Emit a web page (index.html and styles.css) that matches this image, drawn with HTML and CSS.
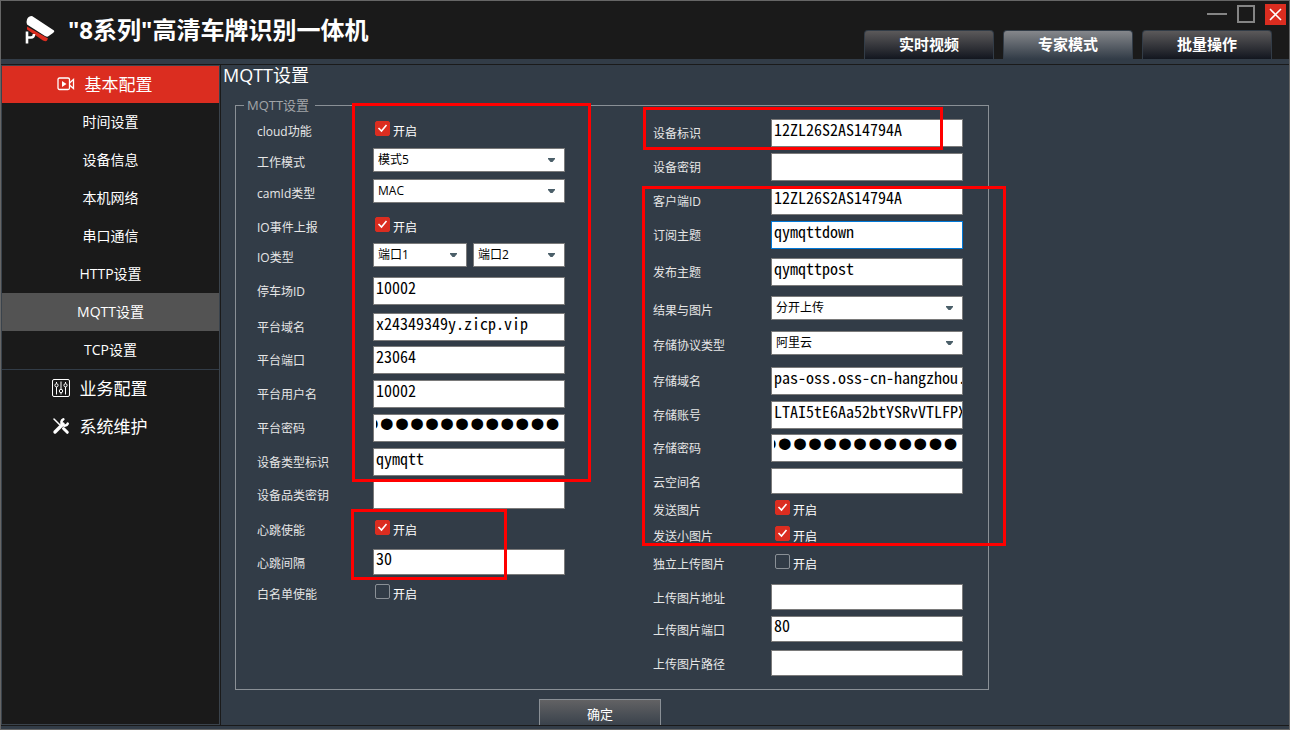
FILE: index.html
```html
<!DOCTYPE html>
<html lang="zh-CN">
<head>
<meta charset="utf-8">
<title>"8系列"高清车牌识别一体机</title>
<link rel="stylesheet" href="styles.css">
</head>
<body>
<div class="app">
  <header class="header">
    <div class="brand">
      <svg class="logo" width="32" height="30" viewBox="0 0 32 30" aria-hidden="true">
        <path d="M4 4.500Q5 1 9 1L31 15.500Q32 16.500 30 18L25 21.500Q24 22 22 21L4 9.500Q3 7 4 4.500Z" fill="#fff"/>
        <path d="M4 11.500L25 23.500L24 25.500Q23 27 20 25.500L4 14.500Z" fill="#db2d20"/>
        <path d="M4 16.500V28.500M5 22.500H8Q11 22.500 11 19" fill="none" stroke="#fff" stroke-width="2.600"/>
      </svg>
      <span class="brand-name">"8系列"高清车牌识别一体机</span>
    </div>
    <div class="header-side">
      <div class="window-buttons">
        <button class="win-btn" type="button" aria-label="最小化"><svg width="20" height="22" viewBox="0 0 20 22"><path d="M0 11H20" stroke="#858585" stroke-width="2"/></svg></button>
        <button class="win-btn" type="button" aria-label="最大化"><svg width="18" height="22" viewBox="0 0 18 22"><rect x="1" y="3" width="16" height="16" fill="none" stroke="#858585" stroke-width="2"/></svg></button>
        <button class="win-btn win-close" type="button" aria-label="关闭"><svg width="21" height="21" viewBox="0 0 21 21"><path d="M5 5L16 16M16 5L5 16" stroke="#fff" stroke-width="1.600"/></svg></button>
      </div>
      <nav class="tabs">
        <button class="tab" type="button">实时视频</button>
        <button class="tab tab-active" type="button">专家模式</button>
        <button class="tab" type="button">批量操作</button>
      </nav>
    </div>
  </header>

  <div class="body">
    <nav class="sidebar">
      <a class="group group-active" href="#basic">
        <svg width="18" height="16" viewBox="0 0 18 16" fill="none" stroke="#fff" stroke-width="1.300"><rect x="1" y="3" width="11.500" height="11.500" rx="1.500"/><path d="M12.500 8L16.500 4.500V13.500L12.500 10"/><path d="M5 6L9.500 9L5 12Z" fill="#fff" stroke="none"/></svg>
        基本配置
      </a>
      <ul class="subnav">
        <li><a href="#time">时间设置</a></li>
        <li><a href="#device">设备信息</a></li>
        <li><a href="#network">本机网络</a></li>
        <li><a href="#serial">串口通信</a></li>
        <li><a href="#http">HTTP设置</a></li>
        <li><a class="current" href="#mqtt">MQTT设置</a></li>
        <li><a href="#tcp">TCP设置</a></li>
      </ul>
      <a class="group group-wide" href="#business">
        <svg width="18" height="18" viewBox="0 0 18 18" fill="none" stroke="#fff"><rect x="0.500" y="0.500" width="17" height="17" rx="1.500"/><path d="M4.500 3V4.500M4.500 8V15.500M9 2.500V10M9 14V15.500M13.500 3V4.500M13.500 8V15.500"/><circle cx="4.500" cy="6.300" r="1.600"/><circle cx="9" cy="12" r="1.700"/><circle cx="13.500" cy="6.300" r="1.600"/></svg>
        业务配置
      </a>
      <a class="group group-wide" href="#system">
        <svg width="18" height="18" viewBox="0 0 18 18" fill="none" stroke="#fff" stroke-linecap="round"><path d="M3 15L11 7" stroke-width="3.400"/><path d="M11.300 2.300A3.300 3.300 0 1 0 15.700 6.700" stroke-width="2.600"/><path d="M2 2L7.500 7.500" stroke-width="1.500"/><path d="M11.500 11.500L15.300 15.300" stroke-width="3"/></svg>
        系统维护
      </a>
    </nav>

    <main class="content">
      <h1 class="page-title">MQTT设置</h1>
      <form class="form">
        <fieldset class="panel">
          <legend>MQTT设置</legend>
          <div class="fields fields-left">
            <span class="name">cloud功能</span>
            <label class="check"><input type="checkbox" checked><span>开启</span></label>
            <label class="name" for="mode">工作模式</label>
            <select id="mode" class="select"><option>模式5</option></select>
            <label class="name" for="cam">camId类型</label>
            <select id="cam" class="select"><option>MAC</option></select>
            <span class="name">IO事件上报</span>
            <label class="check"><input type="checkbox" checked><span>开启</span></label>
            <label class="name" for="io1">IO类型</label>
            <div class="pair">
              <select id="io1" class="select"><option>端口1</option></select>
              <select class="select" aria-label="IO类型2"><option>端口2</option></select>
            </div>
            <label class="name" for="park">停车场ID</label>
            <input id="park" class="text" type="text" value="10002">
            <label class="name" for="domain">平台域名</label>
            <input id="domain" class="text" type="text" value="x24349349y.zicp.vip">
            <label class="name" for="port">平台端口</label>
            <input id="port" class="text" type="text" value="23064">
            <label class="name" for="user">平台用户名</label>
            <input id="user" class="text" type="text" value="10002">
            <label class="name" for="pass">平台密码</label>
            <input id="pass" class="text secret" type="password" value="00000000000000">
            <label class="name" for="kind">设备类型标识</label>
            <input id="kind" class="text" type="text" value="qymqtt">
            <label class="name" for="kindkey">设备品类密钥</label>
            <input id="kindkey" class="text" type="text">
            <span class="name">心跳使能</span>
            <label class="check"><input type="checkbox" checked><span>开启</span></label>
            <label class="name" for="beat">心跳间隔</label>
            <input id="beat" class="text text-short" type="text" value="30">
            <span class="name">白名单使能</span>
            <label class="check"><input type="checkbox"><span>开启</span></label>
          </div>
          <div class="fields fields-right">
            <label class="name" for="devid">设备标识</label>
            <input id="devid" class="text" type="text" value="12ZL26S2AS14794A">
            <label class="name" for="devkey">设备密钥</label>
            <input id="devkey" class="text" type="text">
            <label class="name" for="client">客户端ID</label>
            <input id="client" class="text" type="text" value="12ZL26S2AS14794A">
            <label class="name" for="sub">订阅主题</label>
            <input id="sub" class="text text-active" type="text" value="qymqttdown">
            <label class="name" for="pub">发布主题</label>
            <input id="pub" class="text" type="text" value="qymqttpost">
            <label class="name" for="result">结果与图片</label>
            <select id="result" class="select"><option>分开上传</option></select>
            <label class="name" for="proto">存储协议类型</label>
            <select id="proto" class="select"><option>阿里云</option></select>
            <label class="name" for="sdomain">存储域名</label>
            <input id="sdomain" class="text" type="text" value="pas-oss.oss-cn-hangzhou.">
            <label class="name" for="saccount">存储账号</label>
            <input id="saccount" class="text" type="text" value="LTAI5tE6Aa52btYSRvVTLFPX">
            <label class="name" for="spass">存储密码</label>
            <input id="spass" class="text secret" type="password" value="00000000000000">
            <label class="name" for="cloud">云空间名</label>
            <input id="cloud" class="text text-short" type="text">
            <span class="name">发送图片</span>
            <label class="check"><input type="checkbox" checked><span>开启</span></label>
            <span class="name">发送小图片</span>
            <label class="check"><input type="checkbox" checked><span>开启</span></label>
            <span class="name">独立上传图片</span>
            <label class="check"><input type="checkbox"><span>开启</span></label>
            <label class="name" for="upaddr">上传图片地址</label>
            <input id="upaddr" class="text text-short" type="text">
            <label class="name" for="upport">上传图片端口</label>
            <input id="upport" class="text text-short" type="text" value="80">
            <label class="name" for="uppath">上传图片路径</label>
            <input id="uppath" class="text text-short" type="text">
          </div>
        </fieldset>
        <button class="submit" type="button">确定</button>
      </form>
      <div class="mark mark-platform"></div>
      <div class="mark mark-heartbeat"></div>
      <div class="mark mark-device"></div>
      <div class="mark mark-storage"></div>
    </main>
  </div>
</div>
</body>
</html>
```

FILE: styles.css
```css
* { box-sizing: border-box; }

body {
  margin: 0;
  background: #323c47;
  color: #fff;
  font-family: "Open Sans", "Noto Sans CJK SC", sans-serif;
  font-size: 12px;
}

button, input, select { font-family: inherit; }
a { color: inherit; text-decoration: none; }

.app {
  display: flex;
  flex-direction: column;
  height: 100vh;
  padding-bottom: 3px;
  border: 1px solid #666;
}

/* Header */
.header {
  display: flex;
  justify-content: space-between;
  height: 58px;
  background: #1a1a1a;
}

.brand {
  display: flex;
  align-items: center;
  gap: 13px;
  padding-left: 22px;
}

.brand-name {
  font-size: 24px;
  font-weight: 700;
  line-height: 58px;
}

.header-side {
  display: flex;
  flex-direction: column;
  justify-content: space-between;
  align-items: flex-end;
}

.window-buttons {
  display: flex;
  align-items: center;
  gap: 10px;
  padding: 2px 3px 0 0;
}

.win-btn {
  display: flex;
  padding: 0;
  border: 0;
  background: none;
}

.win-close { background: #db2d20; }

.tabs {
  display: flex;
  gap: 9px;
  padding-right: 17px;
}

.tab {
  width: 130px;
  height: 29px;
  padding: 0 0 4px;
  border: 1px solid #323c47;
  border-bottom: 0;
  border-radius: 4px 4px 0 0;
  background: linear-gradient(#5b595a, #12161f);
  color: #fff;
  font-size: 15px;
  font-weight: 700;
}

.tab-active { background: linear-gradient(#85878b, #323c47); }

/* Body */
.body {
  display: flex;
  flex: 1;
  min-height: 0;
  margin-top: 5px;
  border-top: 1px solid #1a1a1a;
  border-bottom: 1px solid #1a1a1a;
}

.sidebar {
  flex: none;
  width: 219px;
  border: 1px solid #3a434c;
  background: #1a1a1a;
}

.group {
  display: flex;
  align-items: center;
  justify-content: center;
  gap: 10px;
  height: 38px;
  padding: 0 12px 3px 0;
  font-size: 17px;
}

.group-wide { padding-right: 22px; }

.group-active {
  height: 37px;
  background: #db2d20;
}

.subnav {
  margin: 0;
  padding: 0;
  border-bottom: 1px solid #323c47;
  list-style: none;
  font-size: 14px;
  line-height: 38px;
  text-align: center;
}

.subnav a { display: block; }
.current { background: #535353; }

.content {
  position: relative;
  flex: 1;
  min-width: 0;
  overflow: hidden;
  border-left: 1px solid #1a1a1a;
}

.page-title {
  margin: 0 0 12px;
  padding-left: 2px;
  font-size: 18px;
  font-weight: 400;
  line-height: 20px;
}

/* Form */
.form { padding-left: 14px; }

.panel {
  display: flex;
  gap: 88px;
  width: 754px;
  margin: 0;
  padding: 4px 25px 13px 21px;
  border: 1px solid #8a9096;
}

.panel legend {
  margin-left: -13px;
  padding: 0 6px 0 3px;
  color: #a2a5a8;
  font-size: 13px;
  line-height: 16px;
}

.fields {
  display: grid;
  align-content: start;
  align-items: start;
}

.fields-left {
  grid-template-columns: 116px 192px;
  grid-template-rows: 31px 31px 34px 30px 34px 36px 33px 34px 34px 34px 33px 35px 33px 31px 24px;
}

.fields-right {
  grid-template-columns: 118px 192px;
  grid-template-rows: 34px 34px 34px 37px 38px 35px 36px 34px 33px 34px 28px 26px 28px 34px 32px 34px 26px;
  padding-top: 2px;
}

.name {
  color: #e6e6e6;
  line-height: 29px;
}

.check {
  display: flex;
  align-items: center;
  gap: 3px;
  height: 23px;
  padding-left: 2px;
}

.check span { padding-top: 4px; }

.fields-right .check { padding-left: 4px; }

.check input {
  width: 15px;
  height: 15px;
  margin: 0;
  appearance: none;
  border: 1px solid #8a9096;
  border-radius: 2px;
}

.check input:checked {
  border-color: #db2d20;
  background: #db2d20 url("data:image/svg+xml,%3Csvg xmlns='http://www.w3.org/2000/svg' width='13' height='13'%3E%3Cpath d='M2.500 6L5.500 9L10.500 3' fill='none' stroke='white' stroke-width='1.600'/%3E%3C/svg%3E") center no-repeat;
}

.select, .text {
  width: 100%;
  margin: 0;
  border: 1px solid #7a7a7a;
  border-radius: 0;
  background: #fff;
  color: #000;
}

.select {
  height: 24px;
  padding: 0 20px 2px 4px;
  appearance: none;
  background: #fff url("data:image/svg+xml,%3Csvg xmlns='http://www.w3.org/2000/svg' width='7' height='4'%3E%3Cpath d='M0 0H7V1L4.500 4H2.500L0 1Z' fill='%234b5f69'/%3E%3C/svg%3E") right 9px center no-repeat;
  font-size: 12px;
}

.pair {
  display: grid;
  grid-template-columns: 94px 92px;
  gap: 6px;
}

.text {
  height: 28px;
  padding: 0 0 8px 2px;
  font-family: "Noto Sans Mono CJK SC", "Liberation Mono", monospace;
  font-size: 16px;
  line-height: 18px;
}

.text-short { height: 26px; }
.text-active { border-color: #0078d7; }

.secret {
  padding: 0 4px 10px 2px;
  direction: rtl;
  font-family: "Liberation Sans", sans-serif;
  font-size: 43px;
}

.submit {
  display: block;
  width: 122px;
  height: 32px;
  margin: 9px 0 0 304px;
  padding: 0 0 3px;
  border: 1px solid #8a9096;
  background: linear-gradient(#626264, #323c47);
  color: #fff;
  font-size: 13px;
}

/* Callout frames laid over the form */
.mark {
  position: absolute;
  border: 3px solid #f00;
  pointer-events: none;
}

.mark-platform { left: 131px; top: 38px; width: 239px; height: 379px; }
.mark-heartbeat { left: 130px; top: 444px; width: 156px; height: 71px; }
.mark-device { left: 422px; top: 42px; width: 300px; height: 43px; }
.mark-storage { left: 421px; top: 121px; width: 364px; height: 360px; }
```
